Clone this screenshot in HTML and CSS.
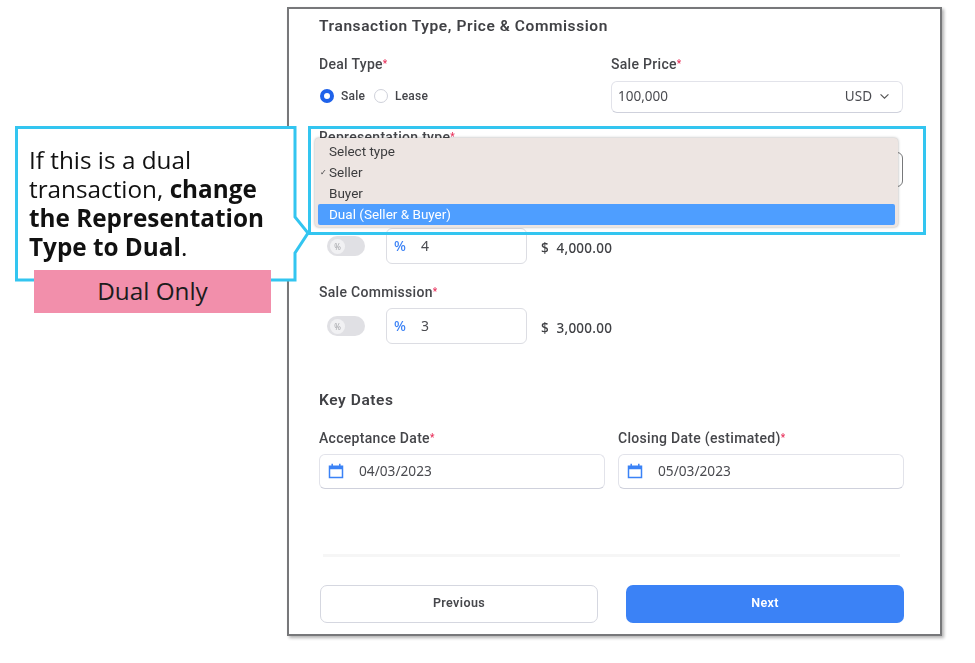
FILE: index.html
```html
<!DOCTYPE html>
<html lang="en">
<head>
<meta charset="utf-8">
<title>Transaction Type, Price &amp; Commission</title>
<link rel="stylesheet" href="styles.css">
</head>
<body>
<main class="panel">
  <h2 class="title">Transaction Type, Price &amp; Commission</h2>

  <div class="row-deal">
    <div>
      <div class="label">Deal Type<span class="req">*</span></div>
      <div class="radios">
        <span class="radio on"></span><span class="radio-text">Sale</span>
        <span class="radio"></span><span class="radio-text">Lease</span>
      </div>
    </div>
    <div>
      <div class="label">Sale Price<span class="req">*</span></div>
      <div class="field price"><span>100,000</span>
        <span class="currency">USD
          <svg class="chev" viewBox="0 0 12 8" width="11" height="7"><path d="M1.5 1.5 6 6l4.5-4.5" fill="none" stroke="#555" stroke-width="1.3"/></svg>
        </span>
      </div>
    </div>
  </div>

  <div class="rep">
    <div class="label">Representation type<span class="req">*</span></div>
    <div class="field rep-select"></div>
  </div>

  <div class="label commission-label">Listing Commission<span class="req">*</span></div>
  <div class="commission first">
    <span class="toggle"><span class="knob">%</span></span>
    <div class="field pct"><span class="pct-sign">%</span><span>4</span></div>
    <span class="amount">$&nbsp; 4,000.00</span>
  </div>

  <div class="label sale-label">Sale Commission<span class="req">*</span></div>
  <div class="commission">
    <span class="toggle"><span class="knob">%</span></span>
    <div class="field pct"><span class="pct-sign">%</span><span>3</span></div>
    <span class="amount">$&nbsp; 3,000.00</span>
  </div>

  <h2 class="title dates-title">Key Dates</h2>
  <div class="row-dates">
    <div>
      <div class="label">Acceptance Date<span class="req">*</span></div>
      <div class="field date">
        <svg class="cal" viewBox="0 0 16 16" width="16" height="16"><path d="M1.5 3.2h13v11.3h-13z M1.5 5.6h13" fill="none" stroke="#3b82f6" stroke-width="1.5"/><path d="M4.2.8v2.6M11.8.8v2.6" stroke="#3b82f6" stroke-width="1.5"/><path d="M1.5 3.2h13v2.4h-13z" fill="#3b82f6"/></svg>
        <span>04/03/2023</span>
      </div>
    </div>
    <div>
      <div class="label">Closing Date (estimated)<span class="req">*</span></div>
      <div class="field date">
        <svg class="cal" viewBox="0 0 16 16" width="16" height="16"><path d="M1.5 3.2h13v11.3h-13z M1.5 5.6h13" fill="none" stroke="#3b82f6" stroke-width="1.5"/><path d="M4.2.8v2.6M11.8.8v2.6" stroke="#3b82f6" stroke-width="1.5"/><path d="M1.5 3.2h13v2.4h-13z" fill="#3b82f6"/></svg>
        <span>05/03/2023</span>
      </div>
    </div>
  </div>

  <hr class="divider">
  <div class="buttons">
    <button class="btn prev">Previous</button>
    <button class="btn next">Next</button>
  </div>
</main>

<div class="highlight"></div>
<ul class="menu">
  <li class="opt">Select type</li>
  <li class="opt"><span class="tick">✓</span>Seller</li>
  <li class="opt">Buyer</li>
  <li class="opt active">Dual (Seller &amp; Buyer)</li>
</ul>

<aside class="callout">
  <svg class="callout-shape" viewBox="0 0 300 160" width="300" height="160"><path d="M1.5 1.5H280V91L293 107 280 127V154H1.5Z" fill="#fff" stroke="#33c5f0" stroke-width="3"/></svg>
  <p class="callout-text">If this is a dual transaction, <b>change the Representation Type to Dual</b>.</p>
</aside>
<div class="dual-tag">Dual Only</div>
</body>
</html>
```
FILE: styles.css
```css
* { box-sizing: border-box; }
html, body { margin: 0; padding: 0; }
body {
  width: 975px;
  height: 663px;
  background: #fff;
  overflow: hidden;
  position: relative;
  font-family: "Noto Sans", sans-serif;
  color: #3f4044;
  padding: 7px 0 0 287px;
  filter: blur(.35px);
}
.panel {
  width: 655px;
  height: 629px;
  border: 2px solid #77787a;
  box-shadow: 2px 2px 3px rgba(0, 0, 0, .3);
  padding: 0 37px 0 30px;
  background: #fff;
}
.title {
  margin: 7px 0 0;
  font: 600 15.5px/20px Roboto, sans-serif;
  letter-spacing: .58px;
  color: #404145;
}
.label {
  font: 500 14px/18px Roboto, sans-serif;
  letter-spacing: .3px;
  color: #45464a;
}
.req { color: #e8315b; font-size: 10px; vertical-align: 2px; }
.row-deal {
  display: grid;
  grid-template-columns: 292px 292px;
  margin-top: 19px;
}
.radios {
  display: flex;
  align-items: center;
  margin-top: 14px;
  height: 18px;
  padding-left: 1px;
}
.radio {
  width: 14px;
  height: 14px;
  border-radius: 50%;
  border: 1.5px solid #cfd1da;
  background: #fff;
}
.radio.on { border: 4px solid #1f62ea; }
.radio-text { font: 500 12px/18px Roboto, sans-serif; letter-spacing: .2px; margin: 0 9px 0 7px; color: #44454a; }
.radio-text:last-child { margin-right: 0; }
.field {
  display: flex;
  align-items: center;
  background: #fff;
  border: 1px solid #e2e3ea;
  border-bottom-color: #cfd1dc;
  border-radius: 6px;
  font-size: 13.5px;
  color: #4a4b50;
}
.price {
  height: 32px;
  margin-top: 8px;
  padding: 0 12px 2px 6px;
  justify-content: space-between;
}
.currency { display: flex; align-items: center; gap: 7px; }
.rep { margin-top: 15px; }
.rep-select { height: 35px; margin-top: 6px; width: 584px; border-color: #77787a; }
.commission-label { margin-top: 18px; }
.commission {
  display: flex;
  align-items: center;
  margin: 7px 0 0 8px;
}
.commission.first { margin-top: 5px; }
.toggle {
  width: 38px;
  height: 20px;
  border-radius: 10px;
  background: #e0e0e4;
  display: flex;
  align-items: center;
  padding-left: 3px;
}
.knob {
  width: 15px;
  height: 15px;
  border-radius: 50%;
  background: #f1f1f3;
  color: #a5a6aa;
  font-size: 8px;
  line-height: 15px;
  text-align: center;
}
.pct {
  width: 141px;
  height: 36px;
  margin-left: 21px;
  padding: 0 0 2px 7px;
  border-color: #dcdde3;
  font-size: 14px;
}
.pct-sign { color: #3b82f6; font-weight: 500; margin-right: 15px; }
.amount { font-size: 13.5px; font-weight: 500; margin-left: 14px; letter-spacing: .25px; padding-top: 4px; }
.sale-label { margin-top: 19px; }
.dates-title { margin-top: 46px; }
.row-dates {
  display: grid;
  grid-template-columns: 286px 286px;
  gap: 13px;
  margin-top: 19px;
}
.date {
  height: 35px;
  margin-top: 7px;
  padding: 0 0 2px 8px;
  gap: 15px;
  font-size: 13.7px;
}
.divider {
  border: 0;
  height: 3px;
  background: #f6f6f6;
  margin: 65px 3px 0 4px;
  width: 577px;
}
.buttons {
  display: grid;
  grid-template-columns: 278px 278px;
  gap: 28px;
  margin: 28px 0 0 1px;
}
.btn {
  height: 38px;
  border-radius: 7px;
  font: 600 12.5px Roboto, sans-serif;
  letter-spacing: .4px;
  padding: 0 0 3px;
}
.prev { background: #fff; border: 1.5px solid #d5d7e0; color: #46474b; }
.next { background: #3b82f6; border: 0; color: #fff; }

.highlight {
  position: absolute;
  left: 308px;
  top: 126px;
  width: 618px;
  height: 109px;
  border: 3px solid #33c5f0;
}
.menu {
  position: absolute;
  left: 315px;
  top: 138px;
  width: 583px;
  height: 89px;
  margin: 0;
  padding: 3px 3px;
  list-style: none;
  background: #ede5e2;
  border-radius: 4px;
  box-shadow: 0 0 3px rgba(0, 0, 0, .35);
  font: 13.5px/21px Roboto, "Noto Sans", sans-serif;
  color: #3c3c3e;
}
.opt { position: relative; padding-left: 11px; height: 21px; }
.tick { position: absolute; left: 2px; top: 0; font-size: 8px; }
.active {
  background: #4e9eff;
  color: #fff;
  border-radius: 2px;
}
.callout { position: absolute; left: 15px; top: 126px; width: 300px; height: 160px; }
.callout-shape { position: absolute; left: 0; top: 0; }
.callout-text {
  position: absolute;
  left: 14px;
  top: 19px;
  width: 250px;
  margin: 0;
  font: 24.3px/29px "Open Sans", sans-serif;
  color: #111;
}
.callout-text b { font-weight: 700; }
.dual-tag {
  position: absolute;
  left: 34px;
  top: 270px;
  width: 237px;
  height: 43px;
  background: #f28fab;
  text-align: center;
  font: 24.3px/41px "Open Sans", sans-serif;
  color: #1c1c1c;
}
```
